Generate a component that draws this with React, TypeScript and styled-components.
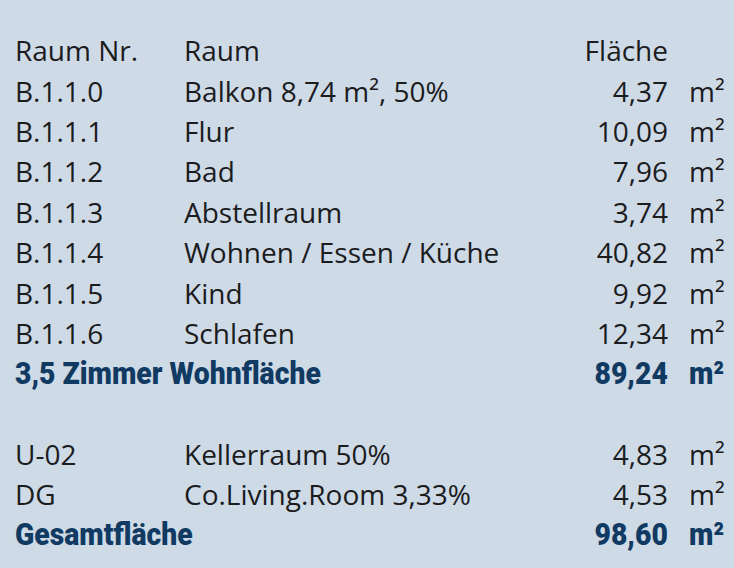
import React from "react";
import styled, { createGlobalStyle } from "styled-components";

const Global = createGlobalStyle`
  html, body { margin: 0; padding: 0; background: #cedae6; }
  body { width: 734px; height: 568px; overflow: hidden; }
`;

const Page = styled.div`
  width: 734px;
  height: 568px;
  box-sizing: border-box;
  padding: 30px 0 0 15px;
  background: #cedae6;
  font-family: "Open Sans", "Noto Sans", sans-serif;
  color: #1b1c1e;
`;

const Table = styled.div`
  display: grid;
  grid-template-columns: 169px 1fr 120px 66px;
  grid-auto-rows: 40.4px;
  align-items: center;
`;

const Cell = styled.div<{ $right?: boolean; $unit?: boolean }>`
  font-size: 28px;
  line-height: 40px;
  white-space: nowrap;
  text-align: ${(p) => (p.$right ? "right" : "left")};
  ${(p) => (p.$unit ? "padding-left: 21px;" : "")}
`;

const BoldCell = styled.div<{ $right?: boolean; $unit?: boolean; $span?: boolean }>`
  ${(p) => (p.$span ? "grid-column: 1 / 3;" : "")}
  ${(p) => (p.$unit ? "padding-left: 21px;" : "")}
  text-align: ${(p) => (p.$right ? "right" : "left")};
  white-space: nowrap;
  line-height: 40px;
  padding-top: 4px;
`;

const BoldText = styled.span<{ $right?: boolean }>`
  display: inline-block;
  font-family: "Roboto", "Liberation Sans", sans-serif;
  font-weight: 900;
  font-size: 32px;
  color: #113a63;
  transform: scaleX(0.885);
  transform-origin: ${(p) => (p.$right ? "right" : "left")} center;
`;

const Spacer = styled.div`
  grid-column: 1 / -1;
`;

type Row = { nr: string; raum: string; area: string };

const rows1: Row[] = [
  { nr: "B.1.1.0", raum: "Balkon 8,74 m², 50%", area: "4,37" },
  { nr: "B.1.1.1", raum: "Flur", area: "10,09" },
  { nr: "B.1.1.2", raum: "Bad", area: "7,96" },
  { nr: "B.1.1.3", raum: "Abstellraum", area: "3,74" },
  { nr: "B.1.1.4", raum: "Wohnen / Essen / Küche", area: "40,82" },
  { nr: "B.1.1.5", raum: "Kind", area: "9,92" },
  { nr: "B.1.1.6", raum: "Schlafen", area: "12,34" },
];

const rows2: Row[] = [
  { nr: "U-02", raum: "Kellerraum 50%", area: "4,83" },
  { nr: "DG", raum: "Co.Living.Room 3,33%", area: "4,53" },
];

function DataRow({ r }: { r: Row }) {
  return (
    <>
      <Cell>{r.nr}</Cell>
      <Cell>{r.raum}</Cell>
      <Cell $right>{r.area}</Cell>
      <Cell $unit>m²</Cell>
    </>
  );
}

function TotalRow({ label, area }: { label: string; area: string }) {
  return (
    <>
      <BoldCell $span>
        <BoldText>{label}</BoldText>
      </BoldCell>
      <BoldCell $right>
        <BoldText $right>{area}</BoldText>
      </BoldCell>
      <BoldCell $unit>
        <BoldText>m²</BoldText>
      </BoldCell>
    </>
  );
}

export default function App() {
  return (
    <Page>
      <Global />
      <Table>
        <Cell>Raum Nr.</Cell>
        <Cell>Raum</Cell>
        <Cell $right>Fläche</Cell>
        <Cell />
        {rows1.map((r) => (
          <DataRow key={r.nr} r={r} />
        ))}
        <TotalRow label="3,5 Zimmer Wohnfläche" area="89,24" />
        <Spacer />
        {rows2.map((r) => (
          <DataRow key={r.nr} r={r} />
        ))}
        <TotalRow label="Gesamtfläche" area="98,60" />
      </Table>
    </Page>
  );
}
